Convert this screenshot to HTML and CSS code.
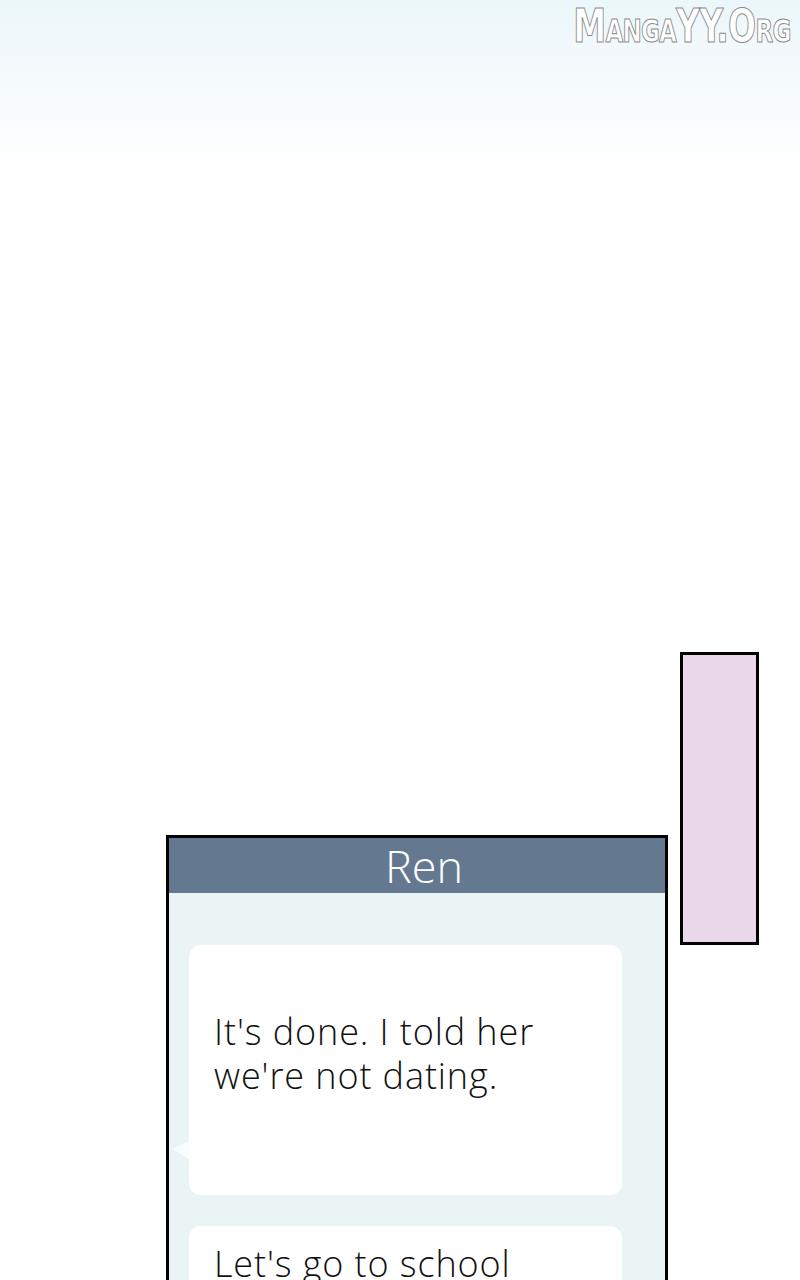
FILE: index.html
```html
<!DOCTYPE html>
<html lang="en">
<head>
    <meta charset="UTF-8">
    <meta name="viewport" content="width=device-width, initial-scale=1.0">
    <title>Ren</title>
    <link rel="stylesheet" href="styles.css">
</head>
<body>

    <div class="sky">
        <div class="watermark">MangaYY.Org</div>
    </div>

    <div class="scene">
        <div class="phone">
            <div class="phone-header">Ren</div>
            <div class="phone-body">
                <div class="bubble first">
                    <p class="line">It's done. I told her</p>
                    <p class="line">we're not dating.</p>
                </div>
                <div class="bubble">
                    <p class="line">Let's go to school</p>
                </div>
            </div>
        </div>
        <div class="side-panel"></div>
    </div>

</body>
</html>
```

FILE: styles.css
```css
html, body {
    margin: 0;
    height: 1280px;
    overflow: hidden;
}
body {
    font-family: 'Open Sans', 'Noto Sans', sans-serif;
    background-color: #fff;
    color: #111;
}

/* pale sky fading into the white panel */
.sky {
    position: relative;
    height: 652px;
    background: linear-gradient(180deg, #ebf7fa 0%, #f2f9fc 50px, #f8fcfd 110px, #fff 170px);
}
.watermark {
    position: absolute;
    top: 0;
    right: 10px;
    font-family: 'DejaVu Sans Condensed', 'DejaVu Sans', sans-serif;
    font-weight: bold;
    font-variant: small-caps;
    font-size: 46px;
    line-height: 52px;
    letter-spacing: -1px;
    color: #fff;
    -webkit-text-stroke: 1px #8a8a8a;
    transform: scaleX(0.8);
    transform-origin: right top;
}

.scene {
    display: flex;
    align-items: flex-start;
    gap: 12px;
    padding-left: 166px;
}

.phone {
    width: 496px;
    margin-top: 183px;
    border: 3px solid #000;
    border-bottom: none;
    background-color: #ebf4f5;
}
.phone-header {
    height: 55px;
    background-color: #64798f;
    color: #fff;
    font-size: 45px;
    line-height: 55px;
    text-align: center;
    padding-left: 14px;
    font-weight: 300;
}
.phone-body {
    display: flex;
    flex-direction: column;
    gap: 31px;
    padding: 52px 43px 40px 20px;
}
.bubble {
    position: relative;
    background-color: #fff;
    border-radius: 12px;
    padding: 14px 25px 30px;
    font-size: 36px;
    font-weight: 300;
    letter-spacing: 0.9px;
}
.line {
    margin: 0;
    height: 44px;
    line-height: 48px;
    overflow: visible;
}
.bubble.first {
    height: 250px;
    box-sizing: border-box;
    padding-top: 63px;
}
/* small tail on the left of the first bubble */
.bubble.first::before {
    content: "";
    position: absolute;
    left: -17px;
    top: 196px;
    border-top: 8px solid transparent;
    border-bottom: 10px solid transparent;
    border-right: 17px solid #f9fcfc;
}

.side-panel {
    width: 73px;
    height: 287px;
    border: 3px solid #000;
    background-color: #ead8ea;
}
```
